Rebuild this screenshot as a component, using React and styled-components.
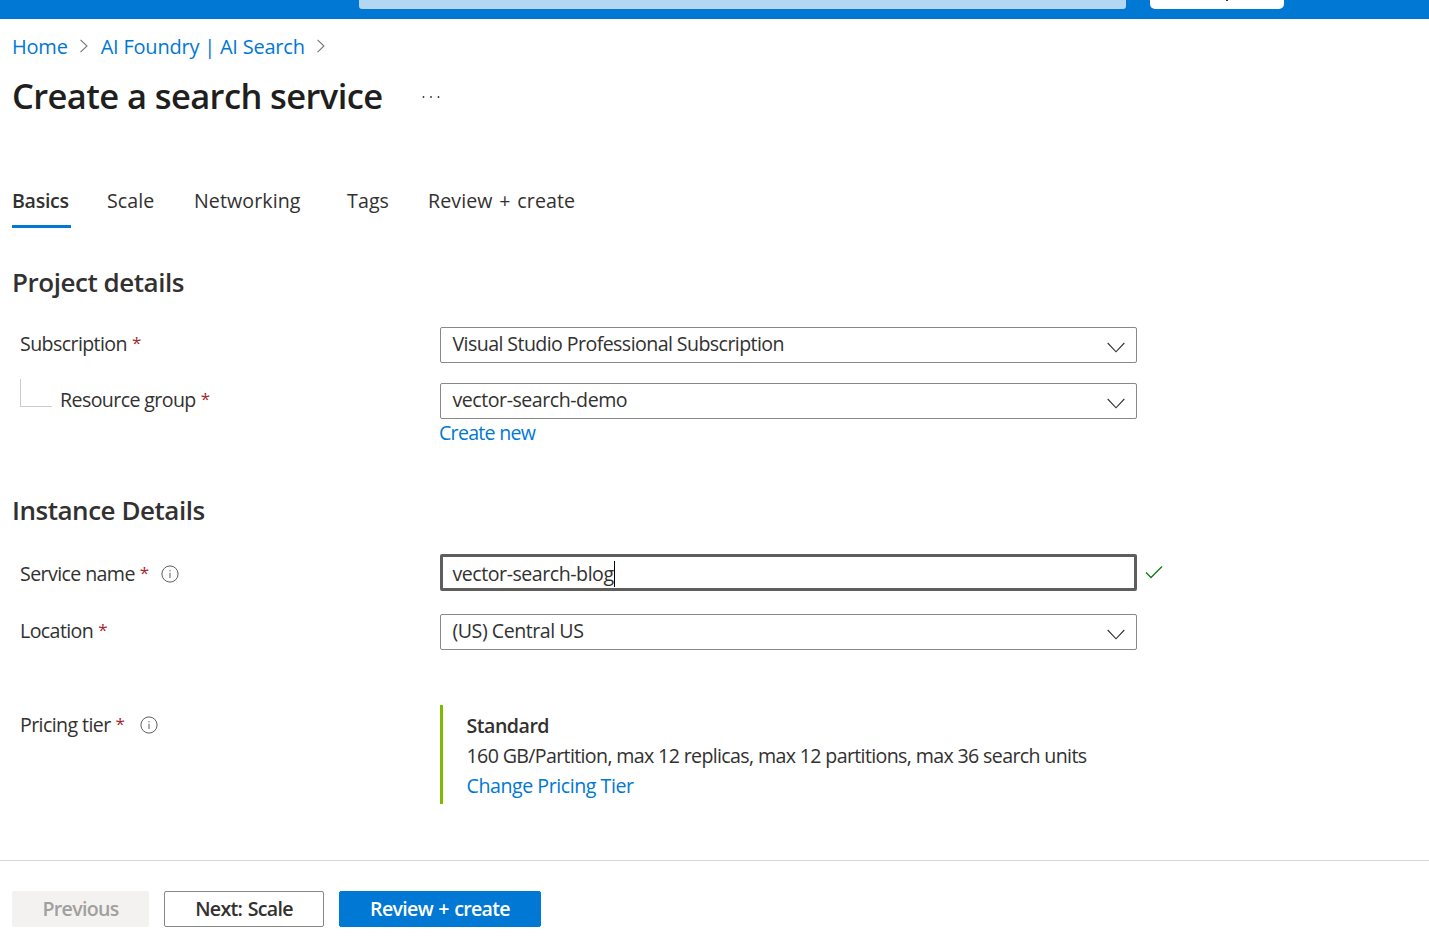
import React from "react";
import styled, { createGlobalStyle } from "styled-components";

const Global = createGlobalStyle`
  html, body { margin: 0; padding: 0; background: #fff; }
  body { font-family: "Open Sans", "Noto Sans", "Liberation Sans", sans-serif; color: #323130; }
`;

const Page = styled.div`
  width: 1429px;
  height: 946px;
  overflow: hidden;
  display: flex;
  flex-direction: column;
`;
const TopBar = styled.header`
  height: 19px;
  flex: none;
  background: #0078d4;
  display: flex;
  align-items: flex-start;
  padding-left: 359px;
`;
const SearchStub = styled.div`
  width: 767px;
  height: 9px;
  background: #b3d6f2;
  border-radius: 0 0 3px 3px;
`;
const CopilotStub = styled.div`
  width: 134px;
  height: 9px;
  margin-left: 24px;
  background: #fff;
  border-radius: 0 0 5px 5px;
  padding-left: 76px;
  box-sizing: border-box;
`;
const StubMark = styled.span`
  display: block;
  width: 2px;
  height: 1px;
  background: #323130;
`;
const Content = styled.main`
  padding: 0 12px;
  display: flex;
  flex-direction: column;
  flex: none;
`;
const Breadcrumb = styled.nav`
  height: 28px;
  margin-top: 13px;
  display: flex;
  align-items: center;
  font-size: 20px;
  letter-spacing: -0.22px;
`;
const Crumb = styled.a`
  color: #0078d4;
  text-decoration: none;
`;
const CrumbSep = styled.svg`
  width: 10px;
  height: 14px;
  margin: 0 12px 0 11px;
  fill: none;
  stroke: #777;
  stroke-width: 1.1;
`;
const TitleRow = styled.div`
  height: 48px;
  margin-top: 12px;
  display: flex;
  align-items: center;
`;
const Title = styled.h1`
  margin: 0;
  font-size: 34.5px;
  font-weight: 600;
  letter-spacing: -0.6px;
  color: #201f1e;
  line-height: 48px;
`;
const More = styled.svg`
  width: 18px;
  height: 4px;
  margin: 2px 0 0 39px;
  fill: #323130;
`;
const Tabs = styled.div`
  height: 55px;
  margin-top: 55px;
  display: flex;
`;
const Tab = styled.div`
  width: ${p => p.$w}px;
  flex: none;
  font-size: 19.6px;
  letter-spacing: ${p => (p.$active ? -0.3 : 0.1)}px;
  word-spacing: 1.5px;
  font-weight: ${p => (p.$active ? 600 : 400)};
  line-height: 28px;
  padding-top: 12px;
  color: #323130;
  position: relative;
`;
const Underline = styled.span`
  position: absolute;
  left: 0;
  top: 50px;
  width: 59px;
  height: 3px;
  background: #0078d4;
`;
const SectionTitle = styled.h2`
  margin: ${p => p.$mt}px 0 0;
  font-size: 26px;
  line-height: 34px;
  font-weight: 600;
  letter-spacing: -0.47px;
  color: #323130;
`;
const Row = styled.div`
  display: grid;
  grid-template-columns: 428px 697px auto;
  margin-top: ${p => p.$mt}px;
  align-items: start;
`;
const Label = styled.label`
  display: flex;
  align-items: center;
  height: 32px;
  margin-top: ${p => p.$drop || 0}px;
  font-size: 19.6px;
  letter-spacing: -0.6px;
  color: #323130;
  padding-left: ${p => (p.$indent ? 48 : 8)}px;
  position: relative;
`;
const Req = styled.span`
  color: #a4262c;
  font-size: 17px;
  margin: -2px 0 0 5px;
`;
const Tree = styled.span`
  position: absolute;
  left: 8px;
  top: -4px;
  width: 31px;
  height: 27px;
  border-left: 1px solid #ccc;
  border-bottom: 1px solid #ccc;
`;
const Info = styled.svg`
  width: 18px;
  height: 18px;
  margin: 2px 0 0 ${p => p.$ml}px;
  fill: none;
  stroke: #605e5c;
  stroke-width: 1;
`;
const Field = styled.div`
  height: ${p => (p.$focus ? 37 : 36)}px;
  box-sizing: border-box;
  border: ${p => (p.$focus ? "3px solid #605e5c" : "1px solid #8a8886")};
  border-radius: 2px;
  display: flex;
  align-items: center;
  padding-left: ${p => (p.$focus ? 9.5 : 11.5)}px;
  padding-top: ${p => (p.$focus ? 2 : 0)}px;
  padding-bottom: ${p => (p.$focus ? 0 : 4)}px;
  font-size: 19.6px;
  letter-spacing: ${p => p.$ls || -0.47}px;
  color: #323130;
  position: relative;
`;
const Caret = styled.span`
  display: inline-block;
  width: 1px;
  height: 26px;
  background: #000;
`;
const Chevron = styled.svg`
  position: absolute;
  right: 11px;
  top: 14px;
  width: 18px;
  height: 11px;
  fill: none;
  stroke: #323130;
  stroke-width: 1.1;
`;
const Check = styled.svg`
  width: 18px;
  height: 14px;
  margin: 11px 0 0 8px;
  fill: none;
  stroke: #107c10;
  stroke-width: 1.3;
`;
const Link = styled.a`
  display: block;
  color: #0078d4;
  font-size: 19.6px;
  letter-spacing: -0.45px;
  line-height: 28px;
  text-decoration: none;
`;
const CreateNew = styled(Link)`
  grid-column: 2;
  margin-left: -1px;
  letter-spacing: -0.72px;
`;
const PricingLink = styled(Link)`
  margin-top: 1px;
`;
const Callout = styled.div`
  height: 99px;
  box-sizing: border-box;
  border-left: 3px solid #7fba00;
  padding: 5px 0 0 23.5px;
  font-size: 19.6px;
  letter-spacing: -0.64px;
  line-height: 30px;
  white-space: nowrap;
`;
const Strong = styled.div`
  font-weight: 600;
  letter-spacing: -0.5px;
  line-height: 31px;
  color: #323130;
`;
const Footer = styled.footer`
  margin-top: 56px;
  border-top: 1px solid #d6d6d6;
  padding: 30px 12px 0;
  display: flex;
  gap: 15px;
`;
const Btn = styled.button`
  width: ${p => p.$w}px;
  height: 36px;
  box-sizing: border-box;
  border-radius: 2px;
  font-family: inherit;
  font-size: 19.6px;
  font-weight: 600;
  letter-spacing: -0.7px;
  word-spacing: 1px;
  padding: 0 0 2px;
  border: ${p =>
    p.$kind === "primary" ? "1px solid #0078d4" : p.$kind === "disabled" ? "1px solid #f3f2f1" : "1px solid #8a8886"};
  background: ${p => (p.$kind === "primary" ? "#0078d4" : p.$kind === "disabled" ? "#f3f2f1" : "#fff")};
  color: ${p => (p.$kind === "primary" ? "#fff" : p.$kind === "disabled" ? "#a19f9d" : "#323130")};
`;

const Sep = () => (
  <CrumbSep viewBox="0 0 10 14"><path d="M1.5 .8 8 7l-6.5 6.2" /></CrumbSep>
);
const Down = () => (
  <Chevron viewBox="0 0 18 11"><path d="M.7 1 9 9.8 17.3 1" /></Chevron>
);
const InfoIcon = ({ ml }) => (
  <Info $ml={ml} viewBox="0 0 18 18">
    <circle cx="9" cy="9" r="8.1" />
    <path d="M9 7.8v5.2M9 5v1.4" />
  </Info>
);

export default function App() {
  return (
    <Page>
      <Global />
      <TopBar>
        <SearchStub />
        <CopilotStub><StubMark /></CopilotStub>
      </TopBar>
      <Content>
        <Breadcrumb>
          <Crumb>Home</Crumb><Sep />
          <Crumb>AI Foundry | AI Search</Crumb><Sep />
        </Breadcrumb>
        <TitleRow>
          <Title>Create a search service</Title>
          <More viewBox="0 0 18 4">
            <circle cx="1.5" cy="2" r="0.9" />
            <circle cx="9" cy="2" r="0.9" />
            <circle cx="16.5" cy="2" r="0.9" />
          </More>
        </TitleRow>
        <Tabs>
          <Tab $w={95} $active>Basics<Underline /></Tab>
          <Tab $w={87}>Scale</Tab>
          <Tab $w={153}>Networking</Tab>
          <Tab $w={81}>Tags</Tab>
          <Tab $w={160}>Review + create</Tab>
        </Tabs>
        <SectionTitle $mt={35}>Project details</SectionTitle>
        <Row $mt={28}>
          <Label>Subscription<Req>*</Req></Label>
          <Field $ls={-0.58}>Visual Studio Professional Subscription<Down /></Field>
        </Row>
        <Row $mt={20}>
          <Label $indent><Tree />Resource group<Req>*</Req></Label>
          <Field>vector-search-demo<Down /></Field>
          <CreateNew>Create new</CreateNew>
        </Row>
        <SectionTitle $mt={46}>Instance Details</SectionTitle>
        <Row $mt={27}>
          <Label $drop={3}>Service name<Req>*</Req><InfoIcon ml={12} /></Label>
          <Field $focus>vector-search-blog<Caret /></Field>
          <Check viewBox="0 0 18 14"><path d="M1 7.5 6 12.5 17 1.5" /></Check>
        </Row>
        <Row $mt={23}>
          <Label>Location<Req>*</Req></Label>
          <Field>(US) Central US<Down /></Field>
        </Row>
        <Row $mt={55}>
          <Label $drop={3}>Pricing tier<Req>*</Req><InfoIcon ml={16} /></Label>
          <Callout>
            <Strong>Standard</Strong>
            160 GB/Partition, max 12 replicas, max 12 partitions, max 36 search units
            <PricingLink>Change Pricing Tier</PricingLink>
          </Callout>
        </Row>
      </Content>
      <Footer>
        <Btn $w={137} $kind="disabled">Previous</Btn>
        <Btn $w={160} $kind="default">Next: Scale</Btn>
        <Btn $w={202} $kind="primary">Review + create</Btn>
      </Footer>
    </Page>
  );
}
